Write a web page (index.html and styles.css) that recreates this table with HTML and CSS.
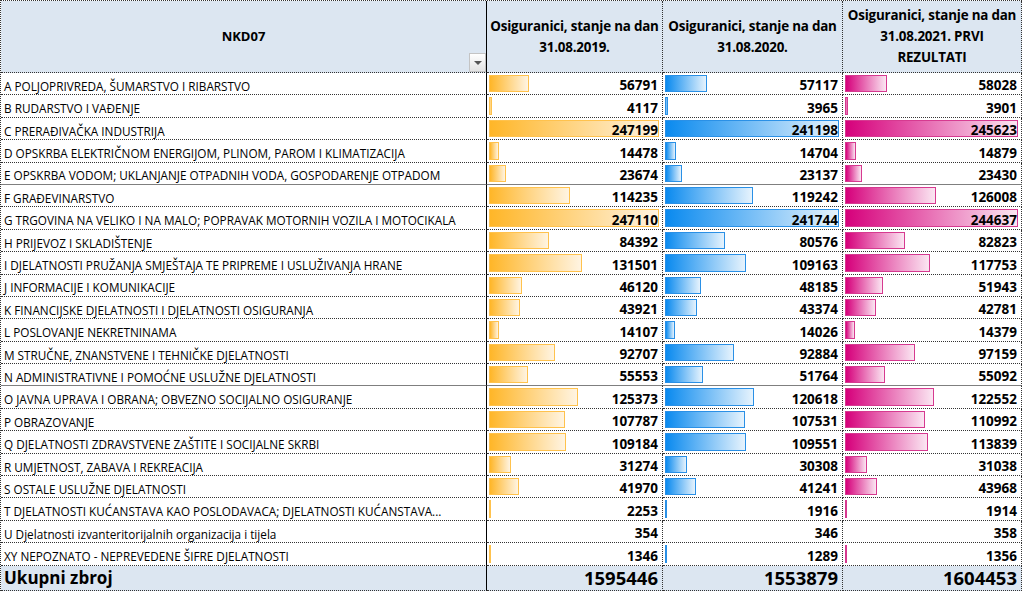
FILE: index.html
```html
<!DOCTYPE html>
<html lang="hr">
<head>
<meta charset="utf-8">
<title>NKD07</title>
<link rel="stylesheet" href="styles.css">
</head>
<body>
<div class="sheet">
  <div class="cell hdr name-hdr">NKD07<span class="dd"><span class="tri"></span></span></div>
  <div class="cell hdr col-hdr">Osiguranici, stanje na dan<br>31.08.2019.</div>
  <div class="cell hdr col-hdr">Osiguranici, stanje na dan<br>31.08.2020.</div>
  <div class="cell hdr col-hdr">Osiguranici, stanje na dan<br>31.08.2021. PRVI<br>REZULTATI</div>

  <div class="cell name">A POLJOPRIVREDA, ŠUMARSTVO I RIBARSTVO</div>
  <div class="cell val y1"><span class="bar" style="width:22.97%"></span><span class="num">56791</span></div>
  <div class="cell val y2"><span class="bar" style="width:23.63%"></span><span class="num">57117</span></div>
  <div class="cell val y3"><span class="bar" style="width:23.62%"></span><span class="num">58028</span></div>

  <div class="cell name">B RUDARSTVO I VAĐENJE</div>
  <div class="cell val y1"><span class="bar" style="width:1.67%"></span><span class="num">4117</span></div>
  <div class="cell val y2"><span class="bar" style="width:1.64%"></span><span class="num">3965</span></div>
  <div class="cell val y3"><span class="bar" style="width:1.59%"></span><span class="num">3901</span></div>

  <div class="cell name">C PRERAĐIVAČKA INDUSTRIJA</div>
  <div class="cell val y1"><span class="bar" style="width:100%"></span><span class="num">247199</span></div>
  <div class="cell val y2"><span class="bar" style="width:99.77%"></span><span class="num">241198</span></div>
  <div class="cell val y3"><span class="bar" style="width:100%"></span><span class="num">245623</span></div>

  <div class="cell name">D OPSKRBA ELEKTRIČNOM ENERGIJOM, PLINOM, PAROM I KLIMATIZACIJA</div>
  <div class="cell val y1"><span class="bar" style="width:5.86%"></span><span class="num">14478</span></div>
  <div class="cell val y2"><span class="bar" style="width:6.08%"></span><span class="num">14704</span></div>
  <div class="cell val y3"><span class="bar" style="width:6.06%"></span><span class="num">14879</span></div>

  <div class="cell name">E OPSKRBA VODOM; UKLANJANJE OTPADNIH VODA, GOSPODARENJE OTPADOM</div>
  <div class="cell val y1"><span class="bar" style="width:9.58%"></span><span class="num">23674</span></div>
  <div class="cell val y2"><span class="bar" style="width:9.57%"></span><span class="num">23137</span></div>
  <div class="cell val y3"><span class="bar" style="width:9.54%"></span><span class="num">23430</span></div>

  <div class="cell name sep">F GRAĐEVINARSTVO</div>
  <div class="cell val y1 sep"><span class="bar" style="width:46.21%"></span><span class="num">114235</span></div>
  <div class="cell val y2 sep"><span class="bar" style="width:49.33%"></span><span class="num">119242</span></div>
  <div class="cell val y3 sep"><span class="bar" style="width:51.30%"></span><span class="num">126008</span></div>

  <div class="cell name">G TRGOVINA NA VELIKO I NA MALO; POPRAVAK MOTORNIH VOZILA I MOTOCIKALA</div>
  <div class="cell val y1"><span class="bar" style="width:99.96%"></span><span class="num">247110</span></div>
  <div class="cell val y2"><span class="bar" style="width:100%"></span><span class="num">241744</span></div>
  <div class="cell val y3"><span class="bar" style="width:99.60%"></span><span class="num">244637</span></div>

  <div class="cell name">H PRIJEVOZ I SKLADIŠTENJE</div>
  <div class="cell val y1"><span class="bar" style="width:34.14%"></span><span class="num">84392</span></div>
  <div class="cell val y2"><span class="bar" style="width:33.33%"></span><span class="num">80576</span></div>
  <div class="cell val y3"><span class="bar" style="width:33.72%"></span><span class="num">82823</span></div>

  <div class="cell name">I DJELATNOSTI PRUŽANJA SMJEŠTAJA TE PRIPREME I USLUŽIVANJA HRANE</div>
  <div class="cell val y1"><span class="bar" style="width:53.20%"></span><span class="num">131501</span></div>
  <div class="cell val y2"><span class="bar" style="width:45.16%"></span><span class="num">109163</span></div>
  <div class="cell val y3"><span class="bar" style="width:47.94%"></span><span class="num">117753</span></div>

  <div class="cell name">J INFORMACIJE I KOMUNIKACIJE</div>
  <div class="cell val y1"><span class="bar" style="width:18.66%"></span><span class="num">46120</span></div>
  <div class="cell val y2"><span class="bar" style="width:19.93%"></span><span class="num">48185</span></div>
  <div class="cell val y3"><span class="bar" style="width:21.15%"></span><span class="num">51943</span></div>

  <div class="cell name">K FINANCIJSKE DJELATNOSTI I DJELATNOSTI OSIGURANJA</div>
  <div class="cell val y1"><span class="bar" style="width:17.77%"></span><span class="num">43921</span></div>
  <div class="cell val y2"><span class="bar" style="width:17.94%"></span><span class="num">43374</span></div>
  <div class="cell val y3"><span class="bar" style="width:17.42%"></span><span class="num">42781</span></div>

  <div class="cell name">L POSLOVANJE NEKRETNINAMA</div>
  <div class="cell val y1"><span class="bar" style="width:5.71%"></span><span class="num">14107</span></div>
  <div class="cell val y2"><span class="bar" style="width:5.80%"></span><span class="num">14026</span></div>
  <div class="cell val y3"><span class="bar" style="width:5.85%"></span><span class="num">14379</span></div>

  <div class="cell name">M STRUČNE, ZNANSTVENE I TEHNIČKE DJELATNOSTI</div>
  <div class="cell val y1"><span class="bar" style="width:37.50%"></span><span class="num">92707</span></div>
  <div class="cell val y2"><span class="bar" style="width:38.42%"></span><span class="num">92884</span></div>
  <div class="cell val y3"><span class="bar" style="width:39.56%"></span><span class="num">97159</span></div>

  <div class="cell name">N ADMINISTRATIVNE I POMOĆNE USLUŽNE DJELATNOSTI</div>
  <div class="cell val y1"><span class="bar" style="width:22.47%"></span><span class="num">55553</span></div>
  <div class="cell val y2"><span class="bar" style="width:21.41%"></span><span class="num">51764</span></div>
  <div class="cell val y3"><span class="bar" style="width:22.43%"></span><span class="num">55092</span></div>

  <div class="cell name sep">O JAVNA UPRAVA I OBRANA; OBVEZNO SOCIJALNO OSIGURANJE</div>
  <div class="cell val y1 sep"><span class="bar" style="width:50.72%"></span><span class="num">125373</span></div>
  <div class="cell val y2 sep"><span class="bar" style="width:49.89%"></span><span class="num">120618</span></div>
  <div class="cell val y3 sep"><span class="bar" style="width:49.89%"></span><span class="num">122552</span></div>

  <div class="cell name">P OBRAZOVANJE</div>
  <div class="cell val y1"><span class="bar" style="width:43.60%"></span><span class="num">107787</span></div>
  <div class="cell val y2"><span class="bar" style="width:44.48%"></span><span class="num">107531</span></div>
  <div class="cell val y3"><span class="bar" style="width:45.19%"></span><span class="num">110992</span></div>

  <div class="cell name">Q DJELATNOSTI ZDRAVSTVENE ZAŠTITE I SOCIJALNE SKRBI</div>
  <div class="cell val y1"><span class="bar" style="width:44.17%"></span><span class="num">109184</span></div>
  <div class="cell val y2"><span class="bar" style="width:45.32%"></span><span class="num">109551</span></div>
  <div class="cell val y3"><span class="bar" style="width:46.35%"></span><span class="num">113839</span></div>

  <div class="cell name">R UMJETNOST, ZABAVA I REKREACIJA</div>
  <div class="cell val y1"><span class="bar" style="width:12.65%"></span><span class="num">31274</span></div>
  <div class="cell val y2"><span class="bar" style="width:12.54%"></span><span class="num">30308</span></div>
  <div class="cell val y3"><span class="bar" style="width:12.64%"></span><span class="num">31038</span></div>

  <div class="cell name">S OSTALE USLUŽNE DJELATNOSTI</div>
  <div class="cell val y1"><span class="bar" style="width:16.98%"></span><span class="num">41970</span></div>
  <div class="cell val y2"><span class="bar" style="width:17.06%"></span><span class="num">41241</span></div>
  <div class="cell val y3"><span class="bar" style="width:17.90%"></span><span class="num">43968</span></div>

  <div class="cell name">T DJELATNOSTI KUĆANSTAVA KAO POSLODAVACA; DJELATNOSTI KUĆANSTAVA...</div>
  <div class="cell val y1"><span class="bar" style="width:0.91%"></span><span class="num">2253</span></div>
  <div class="cell val y2"><span class="bar" style="width:0.79%"></span><span class="num">1916</span></div>
  <div class="cell val y3"><span class="bar" style="width:0.78%"></span><span class="num">1914</span></div>

  <div class="cell name">U Djelatnosti izvanteritorijalnih organizacija i tijela</div>
  <div class="cell val y1"><span class="num">354</span></div>
  <div class="cell val y2"><span class="num">346</span></div>
  <div class="cell val y3"><span class="num">358</span></div>

  <div class="cell name">XY NEPOZNATO - NEPREVEDENE ŠIFRE DJELATNOSTI</div>
  <div class="cell val y1"><span class="bar" style="width:0.54%"></span><span class="num">1346</span></div>
  <div class="cell val y2"><span class="bar" style="width:0.53%"></span><span class="num">1289</span></div>
  <div class="cell val y3"><span class="bar" style="width:0.55%"></span><span class="num">1356</span></div>

  <div class="cell total name-total">Ukupni zbroj</div>
  <div class="cell total num-total">1595446</div>
  <div class="cell total num-total">1553879</div>
  <div class="cell total num-total">1604453</div>
</div>
</body>
</html>
```

FILE: styles.css
```css
html, body {
  margin: 0;
  padding: 0;
  background: #ffffff;
}

body {
  font-family: "Open Sans", "Liberation Sans", sans-serif;
  color: #000;
}

.sheet {
  display: grid;
  grid-template-columns: 486px 176px 180px 179px;
  grid-template-rows: 72px repeat(22, 22.4px) 25px;
  width: max-content;
  border-left: 1px dotted #333;
  border-top: 1px dotted #333;
}

.cell {
  box-sizing: border-box;
  border-right: 1px dotted #333;
  border-bottom: 1px dotted #333;
  position: relative;
  overflow: hidden;
  white-space: nowrap;
}

.sheet > .cell:nth-child(4n+1) {
  border-right: 1px solid #000;
}

.sep {
  border-top: 1px solid #7f7f7f;
  margin-top: -1px;
}

.hdr {
  background: #dce6f1;
  font-weight: 700;
  font-size: 13.4px;
  line-height: 21px;
  text-align: center;
  display: flex;
  align-items: center;
  justify-content: center;
  letter-spacing: -0.2px;
}

.name-hdr {
  font-size: 13px;
  letter-spacing: 0;
}

.dd {
  position: absolute;
  right: 0;
  bottom: 0;
  width: 17px;
  height: 19px;
  box-sizing: border-box;
  border: 1px solid #c4c4c4;
  background: linear-gradient(#ffffff, #e2e2e2);
  display: flex;
  align-items: center;
  justify-content: center;
}

.tri {
  width: 0;
  height: 0;
  border-left: 4px solid transparent;
  border-right: 4px solid transparent;
  border-top: 4px solid #555;
}

.name {
  font-size: 11.75px;
  display: flex;
  align-items: flex-end;
  padding: 0 0 0.5px 3px;
}

.val {
  display: flex;
  align-items: flex-end;
  justify-content: flex-end;
  padding: 0 4px 0 0;
}

.num {
  position: relative;
  font-weight: 700;
  font-size: 13.5px;
  line-height: 18px;
}

.bar {
  position: absolute;
  left: 2px;
  top: 2px;
  bottom: 2px;
  max-width: calc(100% - 5px);
  box-sizing: border-box;
  border: 1px solid;
}

.y1 .bar {
  background: linear-gradient(to right, #ffb628, #fff4e2);
  border-color: #ffc24d;
}

.y2 .bar {
  background: linear-gradient(to right, #0a8aef, #e6f3fd);
  border-color: #2a90e6;
}

.y3 .bar {
  background: linear-gradient(to right, #d6007b, #fbe6f2);
  border-color: #d63a90;
}

.total {
  background: #dce6f1;
  font-weight: 700;
  display: flex;
  align-items: center;
}

.name-total {
  font-size: 17px;
  padding-left: 3px;
}

.num-total {
  font-size: 18.5px;
  justify-content: flex-end;
  padding-right: 4px;
}
```
